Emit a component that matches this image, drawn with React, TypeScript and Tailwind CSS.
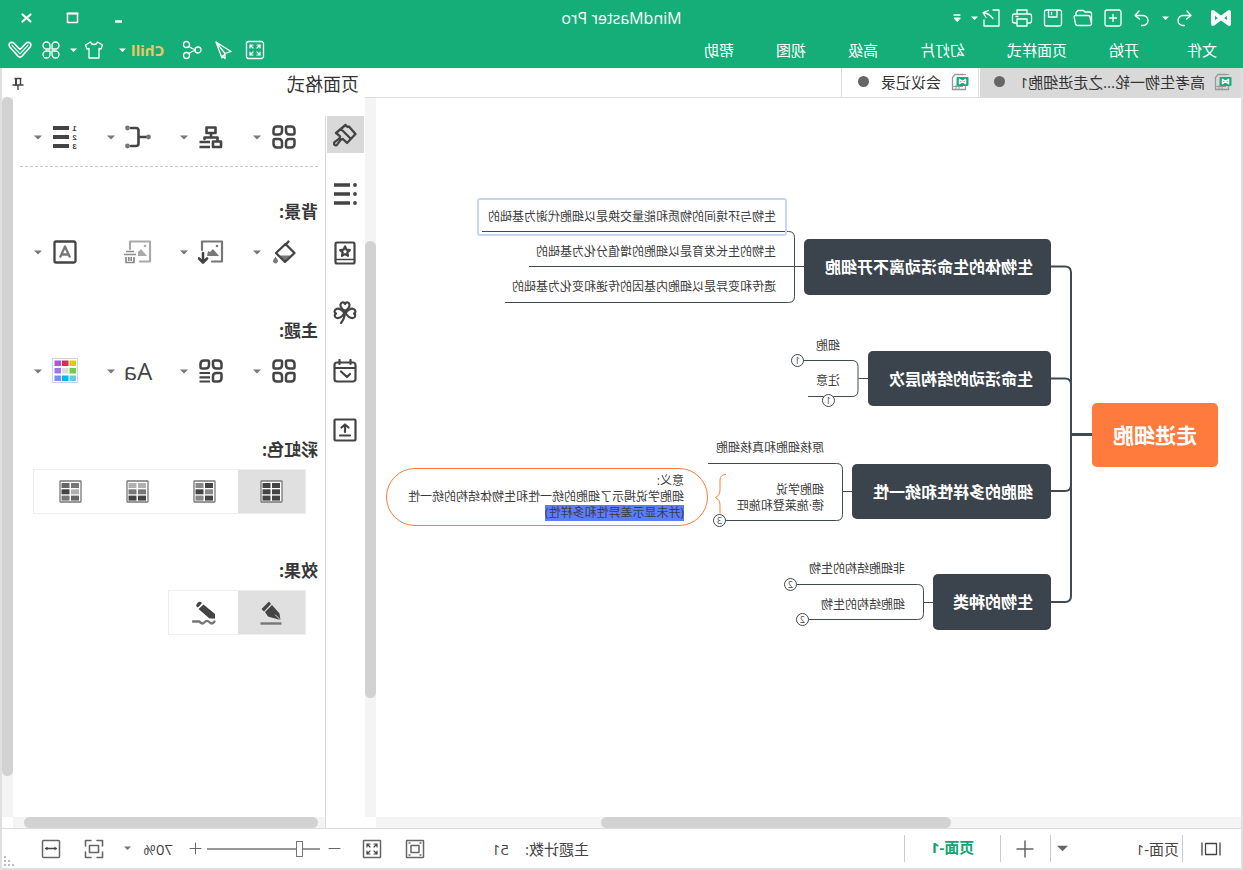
import React from 'react'

interface IconProps {
  children: React.ReactNode
  className?: string
  box?: string
}

// Line icon on a 24 grid, coloured by the current text colour
function Icon({ children, className = 'size-6', box = '0 0 24 24' }: IconProps) {
  return (
    <svg
      viewBox={box}
      className={`shrink-0 ${className}`}
      fill="none"
      stroke="currentColor"
      strokeWidth="2.200"
      strokeLinecap="round"
      strokeLinejoin="round"
      aria-hidden="true"
    >
      {children}
    </svg>
  )
}

function Caret({ className = 'w-2 text-[#777]' }: { className?: string }) {
  return (
    <svg viewBox="0 0 8 5" className={`shrink-0 ${className}`} fill="currentColor" aria-hidden="true">
      <path d="M0 0.5h8L4 4.5z" />
    </svg>
  )
}

function IconButton({ label, className = '', children }: { label: string; className?: string; children: React.ReactNode }) {
  return (
    <button type="button" aria-label={label} className={`flex shrink-0 items-center justify-center ${className}`}>
      {children}
    </button>
  )
}

const menus = ['开始', '页面样式', '幻灯片', '高级', '视图', '帮助']

function TitleBar() {
  return (
    <div className="grid h-9 grid-cols-[1fr_auto_1fr] items-center">
      <div className="flex items-center pl-[11px]">
        <Icon className="w-[22px] h-5" box="0 0 22 20">
          <path d="M3 4v12L19 4v12z" strokeWidth="4" />
        </Icon>
        <IconButton label="撤销" className="ml-4 w-5">
          <Icon className="size-5" box="0 0 20 20">
            <path d="M7 3 3 7.500l4.500 3.500M3.500 7.500H11a5 5 0 0 1 0 10H9.500" strokeWidth="1.300" />
          </Icon>
        </IconButton>
        <Caret className="ml-[5px] w-[7px]" />
        <IconButton label="重做" className="ml-[10px] w-5">
          <Icon className="size-5" box="0 0 20 20">
            <path d="M13 3l4 4.500-4.500 3.500M16.500 7.500H9a5 5 0 0 0 0 10h1.500" strokeWidth="1.300" />
          </Icon>
        </IconButton>
        <div className="ml-[9px] flex items-center gap-[10px]">
          <IconButton label="新建">
            <Icon className="size-5" box="0 0 20 20">
              <rect x="2" y="2" width="16" height="16" rx="2" strokeWidth="1.300" />
              <path d="M10 6.500v7M6.500 10h7" strokeWidth="1.300" />
            </Icon>
          </IconButton>
          <IconButton label="打开">
            <Icon className="size-5" box="0 0 20 20">
              <path d="M1.500 15.500V5.500c0-1 .5-1.500 1.500-1.500h5l1.500-1.500H15l2 2V7M1.500 15.500 3 9c.3-1 .8-1.500 2-1.500h12.500c1.200 0 1.500.8 1.300 1.700L17.500 16c-.3 1-1 1.500-2 1.500H3c-1 0-1.500-.8-1.500-2z" strokeWidth="1.300" />
            </Icon>
          </IconButton>
          <IconButton label="保存">
            <Icon className="size-5" box="0 0 20 20">
              <rect x="1.500" y="2" width="17" height="16" rx="2" strokeWidth="1.300" />
              <path d="M6 2v7h8.500V2M11.500 4.500v2" strokeWidth="1.300" />
            </Icon>
          </IconButton>
          <IconButton label="打印">
            <Icon className="w-[22px] h-5" box="0 0 22 20">
              <path d="M6 6V2h10v4M6 15H3.500c-1.200 0-2-.8-2-2V8c0-1.200.8-2 2-2h15c1.200 0 2 .8 2 2v5c0 1.200-.8 2-2 2H16M6 11h10v7H6zM15 8.500h2" strokeWidth="1.300" />
            </Icon>
          </IconButton>
          <IconButton label="导出">
            <Icon className="size-5" box="0 0 20 20">
              <path d="M8 2H2v16h15v-6M8 10.500C10 8 12 5.500 17.500 4.500M12.500 2.500l5.500 2-3 5" strokeWidth="1.300" />
            </Icon>
          </IconButton>
        </div>
        <Caret className="ml-[3px] w-[7px]" />
        <IconButton label="自定义快速访问" className="ml-[9px]">
          <Icon className="h-3 w-[10px]" box="0 0 10 12">
            <path d="M2 3h6" strokeWidth="1.300" />
            <path d="M2 6h6L5 9.500z" fill="currentColor" strokeWidth="1" />
          </Icon>
        </IconButton>
      </div>
      <h1 className="text-base leading-5">MindMaster Pro</h1>
      <div className="flex items-center justify-end gap-[31px] pr-[19px]">
        <IconButton label="最小化">
          <Icon className="size-[15px]" box="0 0 15 15">
            <path d="M4 10.500h7" strokeWidth="2.500" strokeLinecap="butt" />
          </Icon>
        </IconButton>
        <IconButton label="最大化">
          <Icon className="size-[15px]" box="0 0 15 15">
            <path d="M2.500 2.500h10v9h-10z" strokeWidth="1.500" />
            <path d="M2.500 2.500h10" />
          </Icon>
        </IconButton>
        <IconButton label="关闭">
          <Icon className="size-[15px]" box="0 0 15 15">
            <path d="M3.500 3.500l8 7M11.500 3.500l-8 7" />
          </Icon>
        </IconButton>
      </div>
    </div>
  )
}

function MenuBar() {
  return (
    <div className="flex h-7 items-center justify-between">
      <nav className="flex items-center gap-[42px] pl-[26px] text-[15px] leading-5">
        <button type="button" className="mr-[6px]">文件</button>
        {menus.map((name) => (
          <button type="button" key={name}>{name}</button>
        ))}
      </nav>
      <div className="flex items-center pr-[7px]">
        <IconButton label="全屏">
          <Icon className="size-5" box="0 0 20 20">
            <rect x="1.500" y="1.500" width="17" height="17" rx="2" strokeWidth="1.300" />
            <path d="M5 8V5h3M5 5l3 3M12 5h3v3M15 5l-3 3M5 12v3h3M5 15l3-3M15 12v3h-3M15 15l-3-3" strokeWidth="1.200" />
          </Icon>
        </IconButton>
        <IconButton label="发送" className="ml-3">
          <Icon className="size-5" box="0 0 20 20">
            <path d="M17 2 2 11.500l6 2 3 4.500zM17 2 8 13.500v5l2.500-2.500" strokeWidth="1.300" />
          </Icon>
        </IconButton>
        <IconButton label="分享" className="ml-[11px]">
          <Icon className="size-5" box="0 0 20 20">
            <circle cx="4" cy="10" r="3" strokeWidth="1.300" />
            <circle cx="15.500" cy="4.500" r="3" strokeWidth="1.300" />
            <circle cx="15.500" cy="15.500" r="3" strokeWidth="1.300" />
            <path d="M7 9.500l3-1 3-2M7 10.500l3 1 3 2" strokeWidth="1.300" />
          </Icon>
        </IconButton>
        <button type="button" className="ml-[18px] flex items-center gap-[5px] text-[15px] font-bold leading-5 text-[#efc661]">
          Chill
          <Caret className="w-[7px] text-white" />
        </button>
        <button type="button" aria-label="皮肤" className="ml-[15px] flex items-center gap-[7px]">
          <Icon className="size-5" box="0 0 20 20">
            <path d="M6.500 2 1.500 5l1.500 4 2-.5V18h10V8.500l2 .5 1.500-4-5-3c-.5 1.500-2 2.500-3.500 2.500S7 3.500 6.500 2z" strokeWidth="1.300" />
          </Icon>
          <Caret className="w-[7px]" />
        </button>
        <IconButton label="应用" className="ml-[9px]">
          <Icon className="size-5" box="0 0 20 20">
            <path
              d="M9 9H5.500A3.500 3.500 0 1 1 9 5.500zM11 9h3.500A3.500 3.500 0 1 0 11 5.500zM9 11H5.500A3.500 3.500 0 1 0 9 14.500zM11 11h3.500a3.500 3.500 0 1 1-3.500 3.500z"
              strokeWidth="1.300"
            />
          </Icon>
        </IconButton>
        <IconButton label="展开" className="ml-2">
          <Icon className="size-[26px]">
            <path d="M2 6.500c1-2 3.200-2 4.700-.5l5.300 5.500L17.300 6c1.500-1.500 3.700-1.500 4.700.5.400 1.200 0 2-.8 3L14 17.500c-1.300 1.300-2.700 1.300-4 0l-7.200-8c-.8-1-1.200-1.800-.8-3z" strokeWidth="1.500" />
            <path d="M4.500 7.500l7.500 8 7.500-8" strokeWidth="1" />
          </Icon>
        </IconButton>
      </div>
    </div>
  )
}

function FileIcon() {
  return (
    <svg viewBox="0 0 18 18" className="size-[18px] shrink-0" fill="none" aria-hidden="true">
      <path d="M6 1.500h8l2.500 3V16.500H3.500V13" stroke="#999" strokeWidth="1.300" />
      <path d="M3 1.500h4M10 12v4M6 13.500h10M13 12v4" stroke="#999" />
      <rect x="0.500" y="4" width="12" height="9" rx="1" fill="#12ae78" />
      <path d="M3.500 6.300v4.400l6-4.400v4.400z" stroke="#fff" strokeWidth="1.500" strokeLinejoin="round" />
    </svg>
  )
}

function FileTabs() {
  return (
    <div role="tablist" className="flex h-[30px] border-b border-[#dcdcdc] text-[15px] leading-5 text-[#333]">
      <button type="button" role="tab" aria-selected="false" className="flex w-[261px] items-center bg-[#d9d9d9] pb-0.5 pl-[9px]">
        <FileIcon />
        <span className="ml-[9px]">高考生物一轮...之走进细胞1</span>
        <span className="mr-[14px] ml-auto size-[11px] rounded-full bg-[#666]" />
      </button>
      <button type="button" role="tab" aria-selected="true" className="ml-px flex w-[138px] items-center border-x border-[#dcdcdc] pb-0.5 pl-[9px]">
        <FileIcon />
        <span className="ml-[10px]">会议记录</span>
        <span className="mr-4 ml-auto size-[11px] rounded-full bg-[#666]" />
      </button>
    </div>
  )
}

function Topic({ className, children }: { className: string; children: React.ReactNode }) {
  return (
    <div className={`absolute flex items-center rounded-[5px] bg-[#3b444c] pl-[18px] text-base leading-6 font-bold whitespace-nowrap text-white ${className}`}>
      {children}
    </div>
  )
}

function Leaf({ className, children }: { className: string; children: React.ReactNode }) {
  return <div className={`absolute text-xs leading-4 whitespace-nowrap text-[#3c3c3c] ${className}`}>{children}</div>
}

// Count of folded children
function Count({ className, children }: { className: string; children: React.ReactNode }) {
  return (
    <button
      type="button"
      className={`absolute flex size-[13px] items-center justify-center rounded-full border border-[#3f4a52] bg-white text-[9px] leading-3 text-[#444] ${className}`}
    >
      {children}
    </button>
  )
}

function MindMap() {
  return (
    <div className="relative min-h-[719px] flex-1 overflow-hidden bg-white">
      <svg viewBox="2 98 865 719" className="absolute top-0 left-0 h-[719px] w-[865px]" fill="none" stroke="#3f4a52" aria-hidden="true">
        <path d="M151 434.500h21" strokeWidth="3" />
        <path d="M192 266.500h-14q-6 0-6 6V596q0 6 6 6h14M192 378.500h-14q-6 0-6 6M172 485q0 6 6 6h14" strokeWidth="2" />
        <path d="M439 266.500h275M761 231.500H454.500q-6 0-6 6v59q0 6 6 6H738" />
        <path d="M375 378.500h9.500M440 360.500h-49q-6 0-6 6v24q0 6 6 6h44" />
        <path d="M391 491.500h9.500M535 463.500H406.500q-6 0-6 6v45q0 6 6 6H518" />
        <path d="M310 602.500h9.500M446 584.500H325.500q-6 0-6 6v23q0 6 6 6H435" />
        <path d="M517 474.500c5 0 6 3 6 7v8c0 4 1 6 4.500 8-3.500 2-4.500 4-4.500 8v8" stroke="#ff7b3d" />
      </svg>

      <div className="absolute top-[305px] left-[23px] flex h-16 w-[126px] items-center justify-center rounded-[5px] bg-[#ff7b3d] text-[21px] leading-7 font-bold text-white">
        走进细胞
      </div>

      <Topic className="top-[141px] left-[190px] h-14 w-[247px]">生物体的生命活动离不开细胞</Topic>
      <Topic className="top-[253px] left-[190px] h-[55px] w-[183px]">生命活动的结构层次</Topic>
      <Topic className="top-[366px] left-[190px] h-[55px] w-[199px]">细胞的多样性和统一性</Topic>
      <Topic className="top-[476px] left-[190px] h-14 w-[118px]">生物的种类</Topic>

      <div className="absolute top-[100px] left-[454px] h-[38px] w-[310px] rounded-[3px] border-2 border-[#c4d8f5]" />
      <Leaf className="top-[111px] left-[465px]">生物与环境间的物质和能量交换是以细胞代谢为基础的</Leaf>
      <Leaf className="top-[146px] left-[465px]">生物的生长发育是以细胞的增值分化为基础的</Leaf>
      <Leaf className="top-[181px] left-[465px]">遗传和变异是以细胞内基因的传递和变化为基础的</Leaf>

      <Leaf className="top-[240px] left-[401px]">细胞</Leaf>
      <Leaf className="top-[275px] left-[401px]">注意</Leaf>
      <Count className="top-[256px] left-[437px]">1</Count>
      <Count className="top-[296px] left-[406px]">1</Count>

      <Leaf className="top-[342px] left-[417px]">原核细胞和真核细胞</Leaf>
      <Leaf className="top-[384px] left-[417px]">
        细胞学说<br />德·施莱登和施旺
      </Leaf>
      <Count className="top-[416px] left-[515px]">3</Count>
      <Leaf className="top-[370px] left-[533px] flex h-[58px] w-[322px] flex-col items-start justify-center rounded-[29px] border border-[#ff7b3d] pl-[23px]">
        <p>意义:</p>
        <p>细胞学说揭示了细胞的统一性和生物体结构的统一性</p>
        <p className="bg-[#5b7cff]">(并未显示差异性和多样性)</p>
      </Leaf>

      <Leaf className="top-[463px] left-[336px]">非细胞结构的生物</Leaf>
      <Leaf className="top-[499px] left-[336px]">细胞结构的生物</Leaf>
      <Count className="top-[480px] left-[444px]">2</Count>
      <Count className="top-[515px] left-[432px]">2</Count>
    </div>
  )
}

function BrushIcon() {
  return (
    <Icon>
      <path d="M11.500 2 9.500 4 8 3.500 1.500 11l8.500 9 4-4c1 0 2 .5 2.700 1.400l3 4c1 1.200 2 1.200 2.800.4.8-1 .6-2-.4-3l-4-3c-.9-.7-1.300-1.500-1.200-2.500l4-3.300M11.500 2l9.500 8M16 6 6.500 15.500" strokeWidth="2.300" />
    </Icon>
  )
}

function LinesIcon() {
  return (
    <Icon>
      <path d="M7 3h16M7 12h16M7 21h16" strokeWidth="3.600" strokeLinecap="butt" />
      <path d="M2 3h.01M2 12h.01M2 21h.01" strokeWidth="3.800" />
    </Icon>
  )
}

function BookStarIcon() {
  return (
    <Icon>
      <rect x="2.500" y="1.500" width="19" height="21" rx="1.500" />
      <path d="M3 18.500h18" strokeWidth="1.500" />
      <path d="M12 5.500l1.500 3.200 3.300.4-2.500 2.300.7 3.400-3-1.700-3 1.700.7-3.400-2.500-2.300 3.300-.4z" />
    </Icon>
  )
}

function CloverIcon() {
  return (
    <Icon>
      <path d="M12 11C9 9 7 7 7.500 4.500 8 2 11 1.500 12 4c1-2.500 4-2 4.500.5C17 7 15 9 12 11z" />
      <path d="M11.500 13C9 10 6 8 3.500 9 1 10 1 12.500 3 13.500c-2 1.500-1.500 4 1 4.500 3 .5 5.500-2 7.500-5z" />
      <path d="M12.500 13c2.500-3 5.500-5 8-4s2.500 3.500.5 4.500c2 1.500 1.500 4-1 4.500-3 .5-5.500-2-7.500-5zM12 12.500c.3 4 1.500 7.500 4 10.500" />
    </Icon>
  )
}

function CalendarIcon() {
  return (
    <Icon>
      <rect x="1.500" y="3.500" width="21" height="19" rx="2.500" />
      <path d="M6.500 1v4M17.500 1v4M2 9h20M16 12.500l-6 5.500-3-3" />
    </Icon>
  )
}

function UploadIcon() {
  return (
    <Icon>
      <rect x="1.500" y="1.500" width="21" height="21" rx="1" />
      <path d="M12 7v7M8.500 9.500 12 6.500l3.500 3M7 17.500h10" />
    </Icon>
  )
}

const sideTools = [
  { label: '页面格式', icon: <BrushIcon />, active: true },
  { label: '大纲', icon: <LinesIcon /> },
  { label: '图标', icon: <BookStarIcon /> },
  { label: '剪贴画', icon: <CloverIcon /> },
  { label: '任务', icon: <CalendarIcon /> },
  { label: '导出', icon: <UploadIcon /> },
]

function GridIcon() {
  return (
    <Icon>
      <path d="M5 1.500h3.500q1.500 0 1.500 1.500V6q0 3.500-3.500 3.500H3Q1.500 9.500 1.500 8V5Q1.500 1.500 5 1.500zM15.500 1.500H19q3.500 0 3.500 3.500v3q0 1.500-1.500 1.500h-3.500Q14 9.500 14 6V3q0-1.500 1.500-1.500zM3 14h3.500Q10 14 10 17.500V21q0 1.500-1.500 1.500H5q-3.500 0-3.500-3.500v-3.500Q1.500 14 3 14zM17.500 14H21q1.500 0 1.500 1.500V19q0 3.500-3.500 3.500h-3.500Q14 22.500 14 21v-3.500q0-3.500 3.500-3.500z" strokeWidth="2.500" />
    </Icon>
  )
}

function StructureIcon() {
  return (
    <Icon>
      <path d="M7.500 2.500h9V8h-9zM12 8v4M5.500 15v-2.500h13V14M2 16.500h8V22H2z" strokeWidth="2.600" />
      <path d="M13 17h10.500M13 22h10.500" strokeWidth="2.400" strokeLinecap="butt" />
    </Icon>
  )
}

function BranchIcon() {
  return (
    <Icon className="h-6 w-[26px]" box="0 0 26 24">
      <path d="M5 12h7M20 3h-5q-2.500 0-2.500 2.500v13q0 2.500 2.500 2.500h5" strokeWidth="2.600" />
      <path d="M2.500 12h.01M23.500 3h.01M23.500 21h.01" stroke="#777" strokeWidth="4.800" />
    </Icon>
  )
}

function NumberIcon() {
  return (
    <span className="flex items-center gap-[3px]">
      <span className="flex flex-col font-['Liberation_Sans',sans-serif] text-[8px] leading-[9px] font-bold">
        <span>1</span>
        <span>2</span>
        <span>3</span>
      </span>
      <Icon className="h-6 w-4" box="0 0 16 24">
        <path d="M0 3h16M0 12h16M0 21h16" strokeWidth="3.800" strokeLinecap="butt" />
      </Icon>
    </span>
  )
}

function FillIcon() {
  return (
    <Icon>
      <path d="M5.500 15.500h11L11 21z" fill="#777" stroke="none" />
      <path d="M7.500 1.500 10.500 5M10.500 4 20 13l-9 9L1.500 13z" strokeWidth="2.300" />
      <path d="M20.500 17.500c1.500 2 2 2.700 2 3.500a2 2 0 0 1-4 0c0-.8.5-1.500 2-3.500z" fill="#777" stroke="#777" strokeWidth="1" />
    </Icon>
  )
}

function ImageDownIcon() {
  return (
    <Icon className="h-6 w-[26px] text-[#777]" box="0 0 26 24">
      <path d="M12 21.500H2v-20h20V10" />
      <path d="M5 16l6-7 3 3 2-1 1 5z" fill="#777" stroke="none" />
      <path d="M7 6h.01" strokeWidth="2.600" />
      <path d="M21 13v9M17 18.500l4 4 4-4" stroke="#444" strokeWidth="2.600" />
    </Icon>
  )
}

function ImageDeleteIcon() {
  return (
    <Icon className="h-6 w-7 text-[#aaa]" box="0 0 28 24">
      <path d="M12 21.500H2v-20h20V9" />
      <path d="M5 16l6-7 3 3v4z" fill="#aaa" stroke="none" />
      <path d="M7 6h.01" strokeWidth="2.600" />
      <path d="M16 14.500h12M18 11.500h8M18 17v5.500h8V17M20.800 17v4M23.200 17v4" stroke="#8c8c8c" strokeWidth="1.700" strokeLinecap="butt" />
    </Icon>
  )
}

function WatermarkIcon() {
  return (
    <Icon>
      <rect x="1.500" y="1.500" width="21" height="21" rx="1.500" strokeWidth="2.300" />
      <path d="M7 17.500 12 6.500l5 11M8.500 14.500h7" stroke="#777" strokeWidth="2.300" strokeLinecap="butt" />
    </Icon>
  )
}

function ThemeListIcon() {
  return (
    <Icon>
      <path d="M5 1.500h3.500q1.500 0 1.500 1.500V6q0 3.500-3.500 3.500H3Q1.500 9.500 1.500 8V5Q1.500 1.500 5 1.500zM15.500 1.500H19q3.500 0 3.500 3.500v3q0 1.500-1.500 1.500h-3.500Q14 9.500 14 6V3q0-1.500 1.500-1.500zM3 14h3.500Q10 14 10 17.500V21q0 1.500-1.500 1.500H5q-3.500 0-3.500-3.500v-3.500Q1.500 14 3 14z" strokeWidth="2.500" />
      <path d="M13 14h10.500M13 18.300h10.500M13 22.500h10.500" strokeLinecap="butt" />
    </Icon>
  )
}

const themeColors = ['#ebc500', '#d92b55', '#bf4fd0', '#71cc44', '#dcdcdc', '#9a78ee', '#65ccdd', '#00b6f3', '#7b8cff']

function ThemeColorIcon() {
  return (
    <svg viewBox="0 0 26 26" className="size-[26px] shrink-0" aria-hidden="true">
      <rect x="0.500" y="0.500" width="25" height="24" fill="#fff" stroke="#ccd3ea" />
      {themeColors.map((color, i) => (
        <rect key={color} x={2 + (i % 3) * 7.5} y={2.5 + Math.floor(i / 3) * 7.5} width="6.500" height="5.500" fill={color} />
      ))}
    </svg>
  )
}

function Tool({ label, caret = true, children }: { label: string; caret?: boolean; children: React.ReactNode }) {
  return (
    <button type="button" aria-label={label} className="flex h-7 w-[73px] shrink-0 items-center">
      <span className="flex w-9 justify-center">{children}</span>
      {caret && <Caret className="ml-[5px] w-2 text-[#777]" />}
    </button>
  )
}

function SwatchIcon({ fills }: { fills: string[] }) {
  return (
    <svg viewBox="0 0 23 23" className="size-[23px]" aria-hidden="true">
      <rect x="1" y="1" width="21" height="21" rx="0.500" fill="#fff" stroke="#777" strokeWidth="1.300" />
      {fills.map((fill, i) => (
        <rect key={i} x={3 + (i % 2) * 9.5} y={3 + Math.floor(i / 2) * 6.3} width="8" height="5" fill={fill} />
      ))}
    </svg>
  )
}

const rainbows = [
  { label: '单色', fills: ['#444', '#444', '#444', '#444', '#444', '#444'] },
  { label: '交错', fills: ['#444', '#888', '#888', '#444', '#444', '#888'] },
  { label: '渐变', fills: ['#b0b0b0', '#b0b0b0', '#777', '#777', '#444', '#444'] },
  { label: '彩虹', fills: ['#777', '#666', '#b0b0b0', '#444', '#666', '#777'] },
]

function Heading({ children }: { children: React.ReactNode }) {
  return <h3 className="pl-[7px] text-[17px] leading-6 font-bold text-[#383838]">{children}</h3>
}

function FormatPanel() {
  return (
    <aside className="flex w-[363px] shrink-0 flex-col">
      <header className="flex h-[29px] items-center justify-between pt-0.5 pr-[9px] pl-[6px]">
        <h2 className="text-lg leading-6 text-[#333]">页面格式</h2>
        <IconButton label="固定">
          <Icon className="size-[14px] text-[#444]" box="0 0 14 14">
            <path d="M3.500 1.500h7M4.500 2v6M1.500 8h11M7 8v5" strokeWidth="1.400" strokeLinecap="butt" />
            <path d="M9 2v6" strokeWidth="2" />
          </Icon>
        </IconButton>
      </header>
      <div className="flex flex-1">
        <div className="flex w-10 shrink-0 pt-[19px]">
          <div className="flex w-10 flex-col items-center gap-[22px] border-r border-[#d9d9d9] text-[#444]">
            {sideTools.map((tool) => (
              <IconButton key={tool.label} label={tool.label} className={tool.active ? 'size-[37px] bg-[#d9d9d9]' : 'size-[37px]'}>
                {tool.icon}
              </IconButton>
            ))}
          </div>
        </div>
        <div className="flex min-w-0 flex-1 flex-col">
          <div className="flex flex-1">
            <div className="min-w-0 flex-1 text-[#444]">
              <div className="flex pt-[26px] pl-[23px]">
                <Tool label="布局"><GridIcon /></Tool>
                <Tool label="结构"><StructureIcon /></Tool>
                <Tool label="连线"><BranchIcon /></Tool>
                <Tool label="编号"><NumberIcon /></Tool>
              </div>
              <div className="mt-[15px] mr-[7px] ml-[7px] border-t border-dashed border-[#c8c8c8]" />

              <section className="mt-[33px]">
                <Heading>背景:</Heading>
                <div className="mt-[14px] flex pl-[23px]">
                  <Tool label="背景颜色"><FillIcon /></Tool>
                  <Tool label="背景图片"><ImageDownIcon /></Tool>
                  <Tool label="删除背景" caret={false}><ImageDeleteIcon /></Tool>
                  <Tool label="水印"><WatermarkIcon /></Tool>
                </div>
              </section>

              <section className="mt-[53px]">
                <Heading>主题:</Heading>
                <div className="mt-[14px] flex pl-[23px]">
                  <Tool label="主题"><GridIcon /></Tool>
                  <Tool label="主题列表"><ThemeListIcon /></Tool>
                  <Tool label="主题字体"><span className="text-2xl leading-6 font-medium">Aa</span></Tool>
                  <Tool label="主题颜色"><ThemeColorIcon /></Tool>
                </div>
              </section>

              <section className="mt-[53px]">
                <Heading>彩虹色:</Heading>
                <div className="mt-[7px] ml-[19px] flex h-[45px] w-[273px] border border-[#eee]">
                  {rainbows.map((item, i) => (
                    <IconButton key={item.label} label={item.label} className={i === 0 ? 'w-[67px] bg-[#e0e0e0]' : 'w-[67px]'}>
                      <SwatchIcon fills={item.fills} />
                    </IconButton>
                  ))}
                </div>
              </section>

              <section className="mt-[45px]">
                <Heading>效果:</Heading>
                <div className="mt-[7px] ml-[19px] flex h-[45px] w-[138px] border border-[#eee]">
                  <IconButton label="标准" className="w-[67px] bg-[#e0e0e0]">
                    <Icon>
                      <path d="M1.500 22.500h21" stroke="#777" strokeWidth="2.400" strokeLinecap="butt" />
                      <path d="M14 0.500 21.500 8l-2.500 2.500L12 3zM11 4l7 7-3 4.500L8 17.500 2.500 19l1-6.500z" fill="currentColor" stroke="none" />
                      <path d="M3 18.500l4.500-4.500" stroke="#e0e0e0" strokeWidth="1" />
                    </Icon>
                  </IconButton>
                  <IconButton label="手绘" className="w-[67px]">
                    <Icon>
                      <path d="M1.500 20.500q2.500 3.500 5 .8t5 0 5-.8h6.500" stroke="#777" strokeWidth="2.300" />
                      <path d="M14 2q2-2.500 4.500 0 2.500 2.500 0 4.500L17 5.500zM12.500 3.500l5 4.500-11 9.500H1V13z" fill="currentColor" stroke="none" />
                    </Icon>
                  </IconButton>
                </div>
              </section>
            </div>
            <div className="w-[11px] shrink-0 bg-[#f4f4f4]">
              <div className="h-[679px] rounded-full bg-[#d2d2d2]" />
            </div>
          </div>
          <div className="mr-[11px] h-[11px] bg-[#f4f4f4] pr-[11px] pl-[7px]">
            <div className="h-full rounded-full bg-[#d2d2d2]" />
          </div>
        </div>
      </div>
    </aside>
  )
}

function StatusBar() {
  return (
    <footer className="flex h-10 shrink-0 items-center border-t border-[#dcdcdc] text-[15px] leading-5 text-[#444]">
      <IconButton label="页面视图" className="ml-5 w-5">
        <Icon className="h-4 w-5" box="0 0 20 16">
          <path d="M1 2v12M19 2v12M4.500 2.500h11v11h-11z" strokeWidth="1.300" />
        </Icon>
      </IconButton>
      <div className="relative ml-[18px] flex h-[27px] w-[133px] items-center border-x border-[#ccc]">
        <select aria-label="页面" defaultValue="1" className="w-full appearance-none bg-transparent pl-[3px] outline-none">
          <option value="1">页面-1</option>
        </select>
        <Caret className="pointer-events-none absolute right-[6px] w-[11px] text-[#666]" />
      </div>
      <IconButton label="添加页面" className="h-[27px] w-[49px]">
        <Icon className="size-[18px] text-[#666]" box="0 0 18 18">
          <path d="M9 1v16M1 9h16" strokeWidth="1.500" />
        </Icon>
      </IconButton>
      <button type="button" className="h-[27px] w-[97px] border-x border-[#ccc] pb-1 font-bold text-[#12a574]">页面-1</button>
      <p className="mr-auto ml-[315px]">
        主题计数:<span className="ml-4">51</span>
      </p>
      <div className="flex items-center pr-[39px] text-[#666]">
        <IconButton label="适应页面">
          <Icon className="size-5" box="0 0 20 20">
            <rect x="1.500" y="1.500" width="17" height="17" rx="0.500" strokeWidth="1.500" />
            <rect x="6" y="6.500" width="8" height="7" strokeWidth="1.500" />
            <path d="M4 4h1M15 4h1M4 16h1M15 16h1" strokeWidth="1.400" />
          </Icon>
        </IconButton>
        <IconButton label="全屏" className="ml-[23px]">
          <Icon className="size-5" box="0 0 20 20">
            <rect x="1.500" y="1.500" width="17" height="17" rx="0.500" strokeWidth="1.500" />
            <path d="M5 8V5h3M5 5l3 3M12 5h3v3M15 5l-3 3M5 12v3h3M5 15l3-3M15 12v3h-3M15 15l-3-3" stroke="#444" strokeWidth="1.200" />
          </Icon>
        </IconButton>
        <IconButton label="缩小" className="ml-[21px]">
          <Icon className="size-[13px]" box="0 0 13 13">
            <path d="M1 6.500h11" strokeWidth="1" />
          </Icon>
        </IconButton>
        <input
          type="range"
          aria-label="缩放"
          min="0"
          max="100"
          defaultValue="16"
          className="ml-2 h-4 w-[113px] appearance-none bg-transparent [&::-webkit-slider-runnable-track]:h-[2px] [&::-webkit-slider-runnable-track]:bg-[#999] [&::-webkit-slider-thumb]:-mt-[7px] [&::-webkit-slider-thumb]:h-4 [&::-webkit-slider-thumb]:w-[7px] [&::-webkit-slider-thumb]:appearance-none [&::-webkit-slider-thumb]:border [&::-webkit-slider-thumb]:border-[#777] [&::-webkit-slider-thumb]:bg-white"
        />
        <IconButton label="放大" className="ml-[5px]">
          <Icon className="size-[13px]" box="0 0 13 13">
            <path d="M1 6.500h11M6.500 1v11" strokeWidth="1" />
          </Icon>
        </IconButton>
        <button type="button" className="ml-4 flex items-center text-[#444]">
          <span className="w-[42px] text-left">70%</span>
          <Caret className="w-[7px] text-[#777]" />
        </button>
        <IconButton label="居中" className="ml-5">
          <Icon className="size-5" box="0 0 20 20">
            <path d="M7 1.500H1.500V7M13 1.500h5.500V7M7 18.500H1.500V13M13 18.500h5.500V13M5.500 6.500h9v7h-9z" strokeWidth="1.600" />
          </Icon>
        </IconButton>
        <IconButton label="适应宽度" className="ml-[23px]">
          <Icon className="size-5" box="0 0 20 20">
            <rect x="1.500" y="1.500" width="17" height="17" rx="1" strokeWidth="1.500" />
            <path d="M4.500 9.500h11M6 8.500v2M14 8.500v2" stroke="#444" strokeWidth="1.300" />
          </Icon>
        </IconButton>
      </div>
      {/* Resize grip */}
      <svg viewBox="0 0 12 12" className="absolute right-[3px] bottom-[3px] size-3" fill="#bbb" aria-hidden="true">
        <path d="M9 1h2v2H9zM5 5h2v2H5zM9 5h2v2H9zM1 9h2v2H1zM5 9h2v2H5zM9 9h2v2H9z" />
      </svg>
    </footer>
  )
}

export default function App() {
  return (
    <div className="relative flex min-h-screen -scale-x-100 flex-col bg-white font-['Open_Sans','Noto_Sans_CJK_SC',sans-serif]">
      <header className="h-[68px] shrink-0 bg-[#15ae79] text-white">
        <TitleBar />
        <MenuBar />
      </header>
      <div className="flex flex-1 flex-col border-x-2 border-b-2 border-[#dfdfdf]">
        <div className="flex flex-1">
          <main className="flex min-w-0 flex-1 flex-col">
            <FileTabs />
            <div className="flex flex-1">
              <div className="flex min-w-0 flex-1 flex-col">
                <MindMap />
                <div className="h-[11px] bg-[#f4f4f4] pl-[290px]">
                  <div className="h-full w-[350px] rounded-full bg-[#d2d2d2]" />
                </div>
              </div>
              <div className="mb-[11px] w-[11px] bg-[#f4f4f4] pt-[143px]">
                <div className="h-[457px] rounded-full bg-[#d2d2d2]" />
              </div>
            </div>
          </main>
          <FormatPanel />
        </div>
        <StatusBar />
      </div>
    </div>
  )
}
